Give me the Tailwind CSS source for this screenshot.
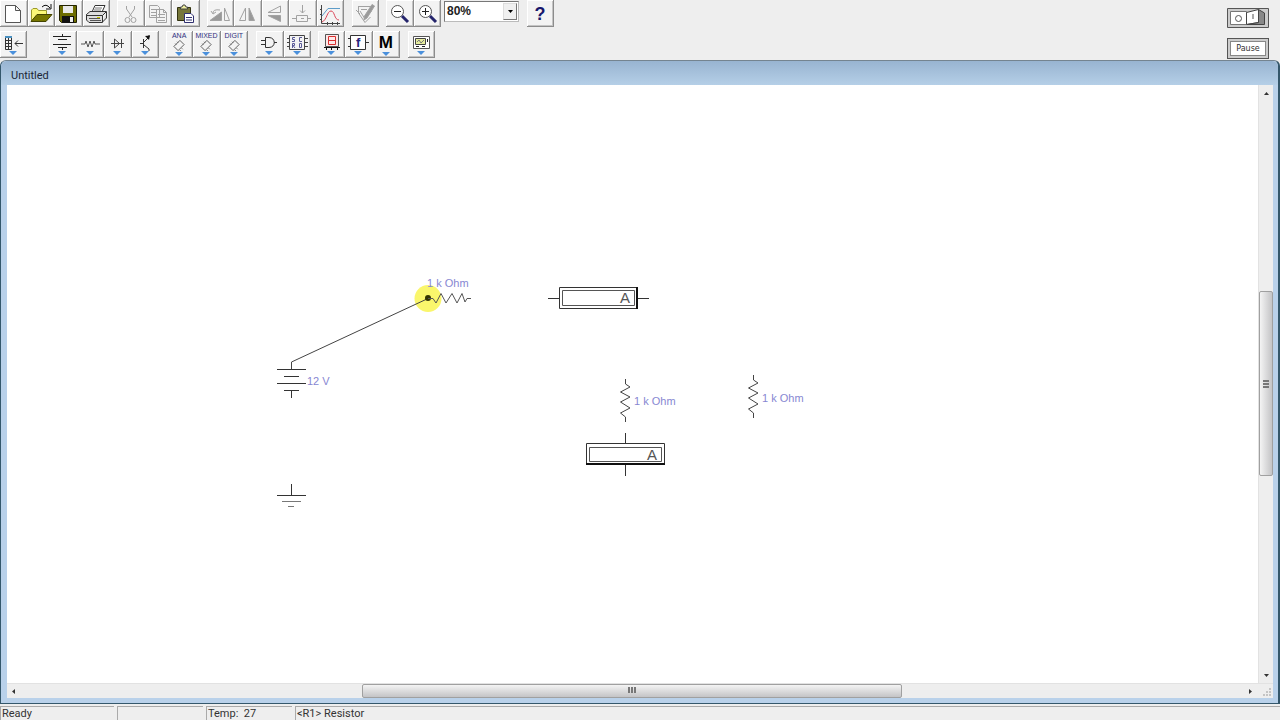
<!DOCTYPE html>
<html lang="en">
<head>
<meta charset="utf-8">
<meta name="viewport" content="width=device-width, initial-scale=1">
<title>Untitled</title>
<script src="https://cdn.jsdelivr.net/npm/@tailwindcss/browser@4"></script>
</head>
<body class="flex h-screen flex-col overflow-hidden bg-[#eeeeee] font-['Roboto',sans-serif] text-black">

<svg class="hidden" aria-hidden="true">
  <symbol id="drop" viewBox="0 0 10 5"><path d="M0 0H10L5 5Z" fill="#4a90dc"/></symbol>
  <symbol id="chip" viewBox="0 0 14 14"><path d="M8 1.500L12.500 6L6 12.500L1.500 8ZM5 3L6 4M3 5L4 6M10 10L11 11M8 12L9 13" fill="none" stroke="#555"/></symbol>
</svg>

<header class="flex h-[60px] shrink-0 justify-between">
  <div class="flex flex-col gap-1">
    <div class="flex h-[27px] items-start" role="toolbar" aria-label="Standard">
      <div class="flex w-[110px] *:flex-1 *:border-r *:border-b *:border-[#8c8c8c] *:bg-[#f3f3f3] *:shadow-[inset_1px_1px_#fff,inset_-1px_-1px_#c4c4c4]">
        <button aria-label="New"><svg class="block h-[26px] w-[26px]" viewBox="0 0 26 26"><path d="M5.500 5.500H15.500L20.500 10.500V22.500H5.500ZM15.500 5.500V10.500H20.500" fill="#fff" stroke="#555"/></svg></button>
        <button aria-label="Open"><svg class="block h-[26px] w-[26px]" viewBox="0 0 26 26"><path d="M3.500 21V10L5 8.500H9L10.500 10.500H18.500V14" fill="#fbf878" stroke="#9b9a2c"/><path d="M3 21.500L9 14.500H24L18 21.500Z" fill="#777700" stroke="#444400"/><path d="M14 7Q18 3 22 8M23 4V9H18" fill="none" stroke="#111"/></svg></button>
        <button aria-label="Save"><svg class="block h-[26px] w-[26px]" viewBox="0 0 26 26"><path d="M4.500 5.500H21.500V22.500H6.500L4.500 20.500Z" fill="#6c6c00" stroke="#222200"/><path d="M8 6H18V13H8Z" fill="#e9e9e9"/><path d="M7 16H19V23H7Z" fill="#111"/><path d="M15 17H18V22H15Z" fill="#eee"/></svg></button>
        <button aria-label="Print"><svg class="block h-[26px] w-[26px]" viewBox="0 0 26 26"><path d="M9 12L12 5.500H22L19 12Z" fill="#fff" stroke="#333"/><path d="M12 8H19M11 10H18" stroke="#777"/><path d="M3.500 14.500L7 11.500H23.500L19.500 15.500H4ZM3.500 14.500V20L6 22.500H19.500V15.500M19.500 22L23.500 18V12" fill="#ddd" stroke="#333"/><path d="M6 18.500H17M7 20.500H18" stroke="#555"/><path d="M14 17.500H17" stroke="#c8c800"/></svg></button>
      </div>
      <div class="ml-[7px] flex w-[83px] *:flex-1 *:border-r *:border-b *:border-[#8c8c8c] *:bg-[#f3f3f3] *:shadow-[inset_1px_1px_#fff,inset_-1px_-1px_#c4c4c4]">
        <button aria-label="Cut"><svg class="block h-[26px] w-[26px]" viewBox="0 0 26 26" fill="none" stroke="#a2a2a2"><path d="M9.500 6V9L15 17M17.500 6V9L12 17"/><circle cx="10.500" cy="20" r="2.500"/><circle cx="16.500" cy="20" r="2.500"/></svg></button>
        <button aria-label="Copy"><svg class="block h-[26px] w-[26px]" viewBox="0 0 26 26" fill="#f3f3f3" stroke="#a2a2a2"><path d="M4.500 5.500H12.500L14.500 7.500V17.500H4.500ZM6 9.500H12M6 12.500H12M6 15.500H12M11.500 9.500H18.500L21.500 12.500V22.500H11.500ZM18.500 9.500V12.500H21.500M13 14.500H20M13 17.500H20M13 20.500H20"/></svg></button>
        <button aria-label="Paste"><svg class="block h-[26px] w-[26px]" viewBox="0 0 26 26"><path d="M5.500 7.500H18.500V20.500H5.500Z" fill="#77773a" stroke="#333311"/><path d="M8.500 9V7H10L11 5H13L14 7H15.500V9Z" fill="#eeeea0" stroke="#444"/><path d="M12.500 13.500H19L21.500 16V22.500H12.500ZM14 17.500H20M14 20H20" fill="#fff" stroke="#303070"/></svg></button>
      </div>
      <div class="ml-[7px] flex w-[137px] *:flex-1 *:border-r *:border-b *:border-[#8c8c8c] *:bg-[#f3f3f3] *:shadow-[inset_1px_1px_#fff,inset_-1px_-1px_#c4c4c4]">
        <button aria-label="Rotate"><svg class="block h-[26px] w-[26px]" viewBox="0 0 26 26" stroke="#a2a2a2"><path d="M3 20.500L14.500 12V20.500Z" fill="#999"/><path d="M17.500 8V20.500H22.500ZM6 13Q6 9 13 10M4 11L6 14L9 12" fill="none"/></svg></button>
        <button aria-label="Flip horizontal"><svg class="block h-[26px] w-[26px]" viewBox="0 0 26 26" stroke="#a2a2a2"><path d="M5.500 20.500L11.500 8V20.500Z" fill="none"/><path d="M15 20.500V8L20.500 20.500Z" fill="#999"/></svg></button>
        <button aria-label="Flip vertical"><svg class="block h-[26px] w-[26px]" viewBox="0 0 26 26" stroke="#a2a2a2"><path d="M6 12.500L18.500 6V12.500Z" fill="none"/><path d="M6 15.500H18.500V21.500Z" fill="#999"/></svg></button>
        <button aria-label="Create subcircuit"><svg class="block h-[26px] w-[26px]" viewBox="0 0 26 26" fill="none" stroke="#a2a2a2"><path d="M7.500 15.500H18.500V21.500H7.500ZM3 18.500H7M19 18.500H22M13.500 5V13M11 10.500L13.500 13L16 10.500M12 18.500H15"/></svg></button>
        <button aria-label="Display graphs"><svg class="block h-[26px] w-[26px]" viewBox="0 0 26 26" fill="none"><path d="M4.500 5V23.500H23M3 9.500H5M3 14.500H5M3 19.500H5M10.500 22V25M15.500 22V25M20.500 22V25" stroke="#444"/><path d="M5 16L11 8.500H23" stroke="#5d9cc8"/><path d="M5 22C10 20 10 11 14 11S17 20 22 20" stroke="#dc4658"/></svg></button>
      </div>
      <div class="ml-2 flex w-[27px] *:flex-1 *:border-r *:border-b *:border-[#8c8c8c] *:bg-[#f3f3f3] *:shadow-[inset_1px_1px_#fff,inset_-1px_-1px_#c4c4c4]">
        <button aria-label="Component properties"><svg class="block h-[26px] w-[26px]" viewBox="0 0 26 26" stroke="#a2a2a2"><path d="M6 6.500H19V12M6.500 7V13L13 22.500L18.500 17M8 11L13 19M4 10L8 14M9 9.500H15" fill="none"/><path d="M20 4.500L22.500 6L15 18L12 20L12.500 16Z" fill="#999"/></svg></button>
      </div>
      <div class="ml-[7px] flex w-[55px] *:flex-1 *:border-r *:border-b *:border-[#8c8c8c] *:bg-[#f3f3f3] *:shadow-[inset_1px_1px_#fff,inset_-1px_-1px_#c4c4c4]">
        <button aria-label="Zoom out"><svg class="block h-[26px] w-[26px]" viewBox="0 0 26 26"><circle cx="11.500" cy="11.500" r="6" fill="#fff" stroke="#555"/><path d="M8 11.500H15" stroke="#222"/><path d="M16 16L22 22" stroke="#25256c" stroke-width="3"/></svg></button>
        <button aria-label="Zoom in"><svg class="block h-[26px] w-[26px]" viewBox="0 0 26 26"><circle cx="11.500" cy="11.500" r="6" fill="#fff" stroke="#555"/><path d="M8 11.500H15M11.500 8V15" stroke="#222"/><path d="M16 16L22 22" stroke="#25256c" stroke-width="3"/></svg></button>
      </div>
      <div class="relative ml-[3px] mt-px h-[21px] w-[75px] border border-[#777] border-r-[#bbb] border-b-[#bbb] bg-white">
        <select aria-label="Zoom level" class="block h-[18px] w-full appearance-none bg-transparent pl-[2px] font-['Liberation_Sans',sans-serif] text-xs leading-4 font-bold text-[#222]"><option>80%</option><option>100%</option></select>
        <span class="pointer-events-none absolute top-px right-px flex h-[17px] w-[14px] items-center justify-center border border-[#ddd] border-r-[#777] border-b-[#777] bg-[#f0f0f0]"><svg class="h-[3px] w-[5px]" viewBox="0 0 5 3"><path d="M0 0H5L2.500 3Z"/></svg></span>
      </div>
      <div class="ml-2 flex w-[27px] *:flex-1 *:border-r *:border-b *:border-[#8c8c8c] *:bg-[#f3f3f3] *:shadow-[inset_1px_1px_#fff,inset_-1px_-1px_#c4c4c4]">
        <button aria-label="Help" class="h-[27px] pt-[2px] font-['Liberation_Sans',sans-serif] text-lg leading-6 font-bold text-[#18186c]">?</button>
      </div>
    </div>

    <div class="flex h-[27px] items-start" role="toolbar" aria-label="Parts bins">
      <div class="flex w-[27px] *:flex-1 *:border-r *:border-b *:border-[#8c8c8c] *:bg-[#f3f3f3] *:shadow-[inset_1px_1px_#fff,inset_-1px_-1px_#c4c4c4]">
        <button aria-label="Favorites"><svg class="block h-[26px] w-[26px]" viewBox="0 0 26 26"><path d="M5.500 5.500H11.500V18.500H5.500ZM5 9.500H12M5 12.500H12M5 15.500H12M8.500 6V18M15 12.500H23M18 9.500L15 12.500L18 15.500" fill="none" stroke="#333"/><path d="M5 5H12V7H5Z" fill="#4a90c0"/><use href="#drop" x="9" y="20" width="8" height="4"/></svg></button>
      </div>
      <div class="ml-[22px] flex w-[110px] *:flex-1 *:border-r *:border-b *:border-[#8c8c8c] *:bg-[#f3f3f3] *:shadow-[inset_1px_1px_#fff,inset_-1px_-1px_#c4c4c4]">
        <button aria-label="Sources"><svg class="block h-[26px] w-[26px]" viewBox="0 0 26 26"><path d="M4 5.500H22M9 8.500H18M4 13.500H22M9 16.500H18M13.500 3V5M13.500 17V19" stroke="#222"/><use href="#drop" x="9" y="20" width="8" height="4"/></svg></button>
        <button aria-label="Basic"><svg class="block h-[26px] w-[26px]" viewBox="0 0 26 26"><path d="M4 13H8L9 10L11 16L13 10L15 16L17 10L18 13H23" fill="none" stroke="#555"/><use href="#drop" x="9" y="20" width="8" height="4"/></svg></button>
        <button aria-label="Diodes"><svg class="block h-[26px] w-[26px]" viewBox="0 0 26 26"><path d="M7 12.500H20M10.500 8V17L15.500 12.500ZM17.500 8V17" fill="none" stroke="#444"/><use href="#drop" x="9" y="20" width="8" height="4"/></svg></button>
        <button aria-label="Transistors"><svg class="block h-[26px] w-[26px]" viewBox="0 0 26 26"><path d="M8 12.500H11M11.500 8V17M12 11L17 6V4M12 14L17 18V20" fill="none" stroke="#333"/><path d="M13 5L18 4.500L17 9Z" fill="#111"/><use href="#drop" x="9" y="20" width="8" height="4"/></svg></button>
      </div>
      <div class="ml-[7px] flex w-[82px] font-['Liberation_Sans',sans-serif] text-[7px] leading-[7px] text-[#303080] *:flex-1 *:border-r *:border-b *:border-[#8c8c8c] *:bg-[#f3f3f3] *:shadow-[inset_1px_1px_#fff,inset_-1px_-1px_#c4c4c4]">
        <button class="flex h-[27px] flex-col items-center pt-px"><span>ANA</span><svg class="h-[13px] w-[14px] shrink-0" viewBox="0 0 14 14" aria-hidden="true"><use href="#chip"/></svg><svg class="h-[4px] w-[8px] shrink-0"><use href="#drop"/></svg></button>
        <button class="flex h-[27px] flex-col items-center pt-px"><span>MIXED</span><svg class="h-[13px] w-[14px] shrink-0" viewBox="0 0 14 14" aria-hidden="true"><use href="#chip"/></svg><svg class="h-[4px] w-[8px] shrink-0"><use href="#drop"/></svg></button>
        <button class="flex h-[27px] flex-col items-center pt-px"><span>DIGIT</span><svg class="h-[13px] w-[14px] shrink-0" viewBox="0 0 14 14" aria-hidden="true"><use href="#chip"/></svg><svg class="h-[4px] w-[8px] shrink-0"><use href="#drop"/></svg></button>
      </div>
      <div class="ml-2 flex w-[55px] *:flex-1 *:border-r *:border-b *:border-[#8c8c8c] *:bg-[#f3f3f3] *:shadow-[inset_1px_1px_#fff,inset_-1px_-1px_#c4c4c4]">
        <button aria-label="Logic gates"><svg class="block h-[26px] w-[26px]" viewBox="0 0 26 26"><path d="M9.500 6.500H13C20 6.500 20 16.500 13 16.500H9.500ZM5 9.500H9M5 13.500H9M18 11.500H21" fill="none" stroke="#333"/><use href="#drop" x="9" y="20" width="8" height="4"/></svg></button>
        <button aria-label="Digital"><svg class="block h-[26px] w-[26px]" viewBox="0 0 26 26"><path d="M5.500 4.500H20.500V18.500H5.500ZM3 7.500H6M3 11.500H6M3 15.500H6M21 7.500H24M21 11.500H24M21 15.500H24" fill="none" stroke="#444"/><path d="M11 6.500H8.500V8.500H10.500V10.500H8M18 6.500H15.500V10.500H18M8.500 17V12.500H10.500V14.500H9L11 17M15.500 12.500H17.500V16.500H15.500V12.500" fill="none" stroke="#5a5a98"/><use href="#drop" x="9" y="20" width="8" height="4"/></svg></button>
      </div>
      <div class="ml-[7px] flex w-[82px] *:flex-1 *:border-r *:border-b *:border-[#8c8c8c] *:bg-[#f3f3f3] *:shadow-[inset_1px_1px_#fff,inset_-1px_-1px_#c4c4c4]">
        <button aria-label="Indicators"><svg class="block h-[26px] w-[26px]" viewBox="0 0 26 26"><path d="M7.500 3.500H20.500V15.500H7.500Z" fill="#fde8e8" stroke="#555"/><path d="M10.500 5.500H17.500V13.500H10.500ZM11 9.500H17" fill="none" stroke="#d83030"/><path d="M6 16.500H22M8.500 16V19M13.500 16V19M19.500 16V19" stroke="#111"/><use href="#drop" x="9" y="20" width="8" height="4"/></svg></button>
        <button aria-label="Controls"><svg class="block h-[26px] w-[26px]" viewBox="0 0 26 26"><path d="M5.500 4.500H20.500V18.500H5.500ZM3 7.500H5M3 15.500H5M21 11.500H24" fill="#fff" stroke="#333"/><text x="11" y="16" font-family="Liberation Sans" font-size="13" font-weight="bold" fill="#252580">f</text><use href="#drop" x="9" y="20" width="8" height="4"/></svg></button>
        <button class="flex h-[27px] flex-col items-center pt-[3px] font-['Liberation_Sans',sans-serif] text-[17px] leading-[18px] font-bold">M<svg class="h-[4px] w-[8px] shrink-0"><use href="#drop"/></svg></button>
      </div>
      <div class="ml-2 flex w-[27px] *:flex-1 *:border-r *:border-b *:border-[#8c8c8c] *:bg-[#f3f3f3] *:shadow-[inset_1px_1px_#fff,inset_-1px_-1px_#c4c4c4]">
        <button aria-label="Instruments"><svg class="block h-[26px] w-[26px]" viewBox="0 0 26 26"><path d="M5.500 5.500H21.500V17.500H5.500Z" fill="#fff" stroke="#555"/><path d="M7.500 7.500H17.500V13.500H7.500Z" fill="#e6eda0" stroke="#444"/><path d="M9 11L11 9L13 12L16 9" fill="none" stroke="#777"/><path d="M8 15.500H11M14 15.500H17M19.500 8V11" stroke="#222"/><use href="#drop" x="9" y="20" width="8" height="4"/></svg></button>
      </div>
    </div>
  </div>

  <div class="mr-[11px] flex flex-col gap-[9px] pt-2">
    <button aria-label="Activate simulation" class="h-[21px] w-[42px]"><svg class="block h-[21px] w-[42px]" viewBox="0 0 42 21"><path d="M.5.5H41.500V19.500H.5Z" fill="#ccc" stroke="#555"/><path d="M3.500 3.500H19.500V16.500H3.500Z" fill="#fff" stroke="#777"/><path d="M19.500 4.500L31.500 1.500V14.500L19.500 16.500Z" fill="#fff" stroke="#444"/><path d="M31.500 1.500L37.500 5V16.500H20L31.500 14.500Z" fill="#888" stroke="#444"/><circle cx="11.500" cy="10.500" r="3" fill="none" stroke="#555"/><path d="M26 6V11" stroke="#555"/></svg></button>
    <button class="h-[21px] w-[42px] border border-[#555] bg-white font-['DejaVu_Sans',sans-serif] text-[8px] leading-[13px] text-[#333] shadow-[inset_0_0_0_2px_#ccc,inset_0_0_0_3px_#888]">Pause</button>
  </div>
</header>

<main class="flex min-h-0 flex-1 flex-col rounded-t-md border border-r-2 border-[#34576b] border-t-[#748490] bg-[#b9d1ea] pr-[5px] pb-[5px] pl-[6px]">
  <h1 class="-mr-[5px] -ml-[6px] flex h-6 shrink-0 items-center rounded-t-md bg-linear-to-b from-[#98b4d1] to-[#b5cfe7] pt-[5px] pl-[10px] text-[11px] leading-4 text-[#1c2736]">Untitled</h1>
  <div class="flex min-h-0 flex-1 flex-col bg-[#eeeeee]">
    <div class="flex min-h-0 flex-1">
      <section id="circuit" class="relative min-w-0 flex-1 bg-white" aria-label="Circuit">
        <svg class="absolute inset-0 h-full w-full" fill="none" stroke="#333">
          <g transform="translate(-7 -85)">
            <circle cx="428" cy="298.500" r="13.500" fill="#faf66c" stroke="none"/>
            <path d="M291.500 369V362L428 298.500" stroke="#444"/>
            <circle cx="428" cy="298" r="3" fill="#333300" stroke="none"/>
            <path d="M428 298.500H433L436 303L441 293.500L446 303L452 293.500L457 303L462 293.500L465 302L467 298.500H471" stroke="#555"/>
            <path d="M277 369.500H306M284 376.500H299M277 383.500H306M284 390.500H299M291.500 391V398M291.500 484V495M277 495.500H306"/>
            <path d="M282 501.500H301M288 506.500H294" stroke="#777"/>
            <path d="M548 298.500H559M638 298.500H649M559.500 287.500H637.500V308.500H559.500Z"/>
            <path d="M562.500 290.500H634.500V305.500H562.500Z" stroke="#555"/>
            <path d="M637 287V309" stroke="#111" stroke-width="2"/>
            <path d="M625.500 433V444M625.500 465V476M586.500 443.500H664.500V464.500H586.500Z"/>
            <path d="M589.500 447.500H661.500V461.500H589.500Z" stroke="#555"/>
            <path d="M586 464H665" stroke="#111" stroke-width="2"/>
            <path id="upright" d="M625.500 379V384L630 387L620.500 392L630 397L620.500 402L630 408L620.500 413L625.500 417V422" stroke="#444"/>
            <use href="#upright" x="128" y="-4"/>
            <g stroke="none" fill="#8787d2" font-family="Liberation Sans, sans-serif" font-size="11">
              <text x="427" y="287">1 k Ohm</text>
              <text x="307" y="385">12 V</text>
              <text x="634" y="405">1 k Ohm</text>
              <text x="762" y="402">1 k Ohm</text>
            </g>
            <g stroke="none" fill="#555" font-family="Liberation Sans, sans-serif" font-size="15">
              <text x="620" y="303">A</text>
              <text x="647" y="460">A</text>
            </g>
          </g>
        </svg>
      </section>
      <div class="flex w-[15px] flex-col border-l border-[#e2e2e2] bg-[#eeeeee]" role="scrollbar" aria-label="Vertical" aria-controls="circuit" aria-valuenow="50">
        <div class="flex flex-[199] justify-center pt-[7px]"><svg class="h-[3px] w-[5px]" viewBox="0 0 5 3"><path d="M0 3L2.500 0L5 3Z" fill="#333"/></svg></div>
        <div class="flex flex-[183] flex-col items-center justify-center gap-px rounded-xs border border-[#a0a0a0] bg-linear-to-r from-[#f4f4f4] to-[#c4c4c6]"><i class="h-[2px] w-[6px] bg-[#777]"></i><i class="h-[2px] w-[6px] bg-[#777]"></i><i class="h-[2px] w-[6px] bg-[#777]"></i></div>
        <div class="flex flex-[201] items-end justify-center pb-[6px]"><svg class="h-[3px] w-[5px]" viewBox="0 0 5 3"><path d="M0 0H5L2.500 3Z" fill="#333"/></svg></div>
      </div>
    </div>
    <div class="flex h-[15px] shrink-0 border-t border-[#e2e2e2]">
      <div class="flex flex-1" role="scrollbar" aria-label="Horizontal" aria-controls="circuit" aria-valuenow="50">
        <div class="flex flex-[350] items-center pl-[5px]"><svg class="h-[5px] w-[3px]" viewBox="0 0 3 5"><path d="M3 0L0 2.500L3 5Z" fill="#333"/></svg></div>
        <div class="flex flex-[538] justify-center gap-px rounded-xs border border-[#a0a0a0] bg-linear-to-b from-[#f4f4f4] to-[#c4c4c6] pt-[2px]"><i class="h-[6px] w-[2px] bg-[#777]"></i><i class="h-[6px] w-[2px] bg-[#777]"></i><i class="h-[6px] w-[2px] bg-[#777]"></i></div>
        <div class="flex flex-[350] items-center justify-end pr-[6px]"><svg class="h-[5px] w-[3px]" viewBox="0 0 3 5"><path d="M0 0L3 2.500L0 5Z" fill="#333"/></svg></div>
      </div>
      <svg class="h-[14px] w-[15px]" viewBox="0 0 15 14" aria-hidden="true"><path d="M11 4H13V6H11ZM8 7H10V9H8ZM11 7H13V9H11ZM5 10H7V12H5ZM8 10H10V12H8ZM11 10H13V12H11Z" fill="#c4c4c4"/></svg>
    </div>
  </div>
</main>

<footer class="flex h-4 shrink-0 gap-[3px] pt-[2px] text-[11px] leading-[13px] text-[#333] *:h-[14px] *:border-t *:border-l *:border-[#aaaaaa] *:pl-px *:whitespace-nowrap">
  <div class="w-[114px]">Ready</div>
  <div class="w-[86px]"></div>
  <div class="w-[86px]">Temp:&nbsp; 27</div>
  <div class="flex-1">&lt;R1&gt; Resistor</div>
</footer>
</body>
</html>
